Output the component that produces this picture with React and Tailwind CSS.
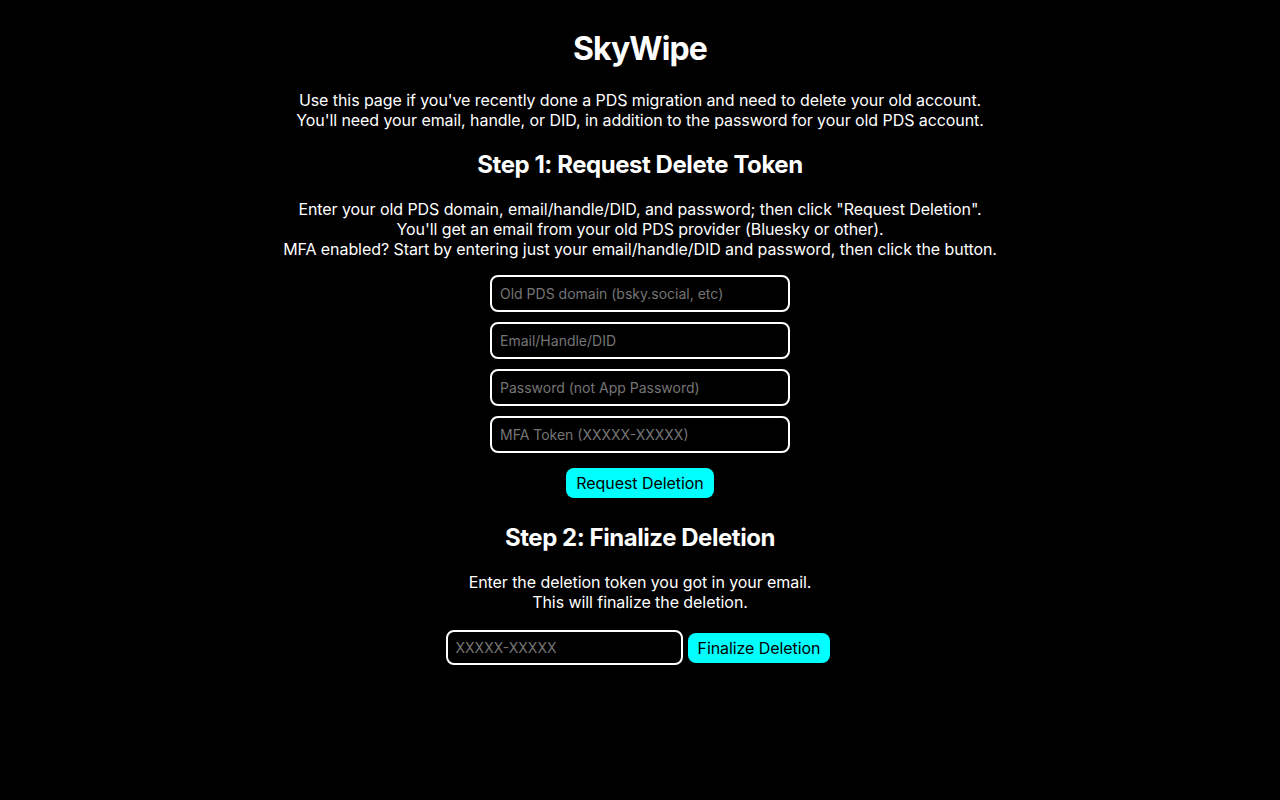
import React, { useState } from 'react';

const fieldClass =
  'block w-[300px] h-[37px] mx-auto rounded-lg border-2 border-white bg-black px-2 text-sm tracking-normal text-white placeholder:text-[#757575] outline-none';

const App = () => {
  const [domain, setDomain] = useState('');
  const [identifier, setIdentifier] = useState('');
  const [password, setPassword] = useState('');
  const [mfa, setMfa] = useState('');
  const [token, setToken] = useState('');

  return (
    <div
      className="min-h-[800px] bg-black text-white text-center pt-[29px] tracking-[-0.07px]"
      style={{ fontFamily: 'Inter, "Noto Sans", sans-serif' }}
    >
      <h1 className="text-[32px] font-bold leading-[40px] tracking-[-0.85px]">SkyWipe</h1>

      <p className="mt-[21px] text-base leading-5">
        Use this page if you've recently done a PDS migration and need to delete your old account.
        <br />
        You'll need your email, handle, or DID, in addition to the password for your old PDS account.
      </p>

      {/* Step 1 */}
      <h2 className="mt-[20px] text-2xl font-bold leading-[29px] tracking-[-0.45px]">Step 1: Request Delete Token</h2>
      <p className="mt-[20px] text-base leading-5">
        Enter your old PDS domain, email/handle/DID, and password; then click "Request Deletion".
        <br />
        You'll get an email from your old PDS provider (Bluesky or other).
        <br />
        MFA enabled? Start by entering just your email/handle/DID and password, then click the button.
      </p>

      <div className="mt-[16px] flex flex-col gap-[10px]">
        <input
          className={fieldClass}
          placeholder="Old PDS domain (bsky.social, etc)"
          value={domain}
          onChange={(e) => setDomain(e.target.value)}
        />
        <input
          className={fieldClass}
          placeholder="Email/Handle/DID"
          value={identifier}
          onChange={(e) => setIdentifier(e.target.value)}
        />
        <input
          className={fieldClass}
          type="password"
          placeholder="Password (not App Password)"
          value={password}
          onChange={(e) => setPassword(e.target.value)}
        />
        <input
          className={fieldClass}
          placeholder="MFA Token (XXXXX-XXXXX)"
          value={mfa}
          onChange={(e) => setMfa(e.target.value)}
        />
      </div>

      <button className="mt-[15px] h-[30px] rounded-lg bg-[#00ffff] px-[10px] text-base text-black">
        Request Deletion
      </button>

      {/* Step 2 */}
      <h2 className="mt-[25px] text-2xl font-bold leading-[29px] tracking-[-0.45px]">Step 2: Finalize Deletion</h2>
      <p className="mt-[20px] text-base leading-5">
        Enter the deletion token you got in your email.
        <br />
        This will finalize the deletion.
      </p>

      <div className="mt-[18px] pr-[4px] flex items-center justify-center gap-[5px]">
        <input
          className="w-[237px] h-[35px] rounded-lg border-2 border-white bg-black px-2 text-sm tracking-normal text-white placeholder:text-[#757575] outline-none"
          placeholder="XXXXX-XXXXX"
          value={token}
          onChange={(e) => setToken(e.target.value)}
        />
        <button className="h-[30px] rounded-lg bg-[#00ffff] px-[10px] text-base text-black">
          Finalize Deletion
        </button>
      </div>
    </div>
  );
};

export default App;
